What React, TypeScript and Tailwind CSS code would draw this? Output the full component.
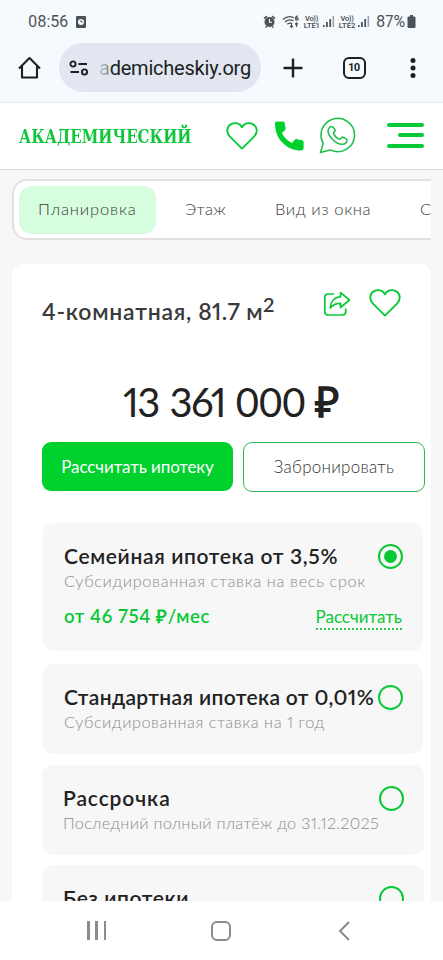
import { clsx } from "clsx";

interface Option {
  title: string;
  note?: string;
  titleClass: string;
  noteClass?: string;
  boxClass: string;
  payment?: string;
}

const options: Option[] = [
  {
    title: "Семейная ипотека от 3,5%",
    note: "Субсидированная ставка на весь срок",
    titleClass: "tracking-[0.65px]",
    noteClass: "tracking-[0.65px]",
    boxClass: "ml-[31px] w-[380px] h-[128px] mb-[13px]",
    payment: "от 46 754 ₽/мес",
  },
  {
    title: "Стандартная ипотека от 0,01%",
    note: "Субсидированная ставка на 1 год",
    titleClass: "tracking-[0.35px]",
    noteClass: "tracking-[0.53px]",
    boxClass: "ml-[31px] w-[380px] h-[90px] mb-[11px]",
  },
  {
    title: "Рассрочка",
    note: "Последний полный платёж до 31.12.2025",
    titleClass: "tracking-[0.9px]",
    noteClass: "tracking-[0.28px]",
    boxClass: "ml-[30px] w-[382px] h-[90px] mb-[10px]",
  },
  {
    title: "Без ипотеки",
    titleClass: "tracking-[0.6px]",
    boxClass: "ml-[30px] w-[382px] h-[90px]",
  },
];

function HeartIcon({ className }: { className?: string }) {
  return (
    <svg viewBox="0 0 32 28" className={clsx("h-7 w-8 shrink-0", className)} fill="none" stroke="#08c935" strokeWidth="1.9" strokeLinejoin="round">
      <path d="M16 26.6 3.7 14.3C-.3 9.9 1 4.2 5.2 2.1 9.5-.1 13.9 1.5 16 5.3c2.1-3.8 6.5-5.4 10.8-3.2 4.2 2.1 5.5 7.8 1.5 12.2Z" />
    </svg>
  );
}

function Signal() {
  return (
    <svg viewBox="0 0 13 13" className="h-[13px] w-[13px] shrink-0" fill="#4c5357">
      <rect x="1" y="10" width="1.6" height="2" />
      <rect x="4" y="7" width="1.8" height="5" />
      <rect x="7.3" y="4" width="1.8" height="8" />
      <rect x="10.5" y="1" width="1.6" height="11" fill="#9da4a9" />
    </svg>
  );
}

function Lte({ slot }: { slot: number }) {
  return (
    <div className="flex w-[17px] shrink-0 flex-col items-center text-[7.5px] font-semibold leading-[7px] text-[#4c5357]">
      <span className="tracking-[-0.3px]">Vo))</span>
      <span>LTE{slot}</span>
    </div>
  );
}

function StatusBar() {
  return (
    <div className="flex h-[43px] items-center pr-[27px] pl-7 font-[Roboto,sans-serif] text-[#4c5357]">
      <span className="w-[41px] text-[16px] tracking-[-0.1px]">08:56</span>
      <svg viewBox="0 0 10 12" className="ml-[7px] h-3 w-[10px]">
        <rect width="10" height="12" rx="1" fill="#4c5357" />
        <circle cx="5" cy="6" r="3" fill="#f5faff" />
        <path d="M5 4.2V6h1.7" stroke="#4c5357" fill="none" />
      </svg>
      <div className="ml-auto flex items-center">
        <svg viewBox="0 0 13 13" className="h-[13px] w-[13px]" fill="#4c5357">
          <circle cx="6.5" cy="7" r="5" />
          <path d="m.5 3 3-2.5 1 1.2-3 2.5ZM12.5 3l-3-2.5-1 1.2 3 2.5ZM2 12.5l1.5-2 1 .8-1.3 1.7ZM11 12.5l-1.5-2-1 .8L9.8 13Z" />
          <path d="M6.5 4v3.2H9" fill="none" stroke="#f5faff" strokeWidth="1.1" />
        </svg>
        <svg viewBox="0 0 18 13" className="ml-[6px] h-[13px] w-[18px]" fill="none" stroke="#4c5357" strokeWidth="1.2">
          <path d="M1 4.5C4.5 1.3 9 1.2 12 3M3 7c2.5-2.3 6-2.5 8.5-1M5.3 9.2c1.5-1.3 3.2-1.4 4.7-.6" />
          <path d="M9.5 8v4M8 10.8 9.5 12.3 11 10.8M14.5 12V8M13 9.3l1.5-1.5L16 9.3" />
          <path d="M15.8 1.2c-2-.2-2.4 1.3-2.2 3 .2 1.4 2.6 1.3 2.6-.2 0-1.3-1.8-1.5-2.5-.4" />
        </svg>
        <div className="ml-[3px] flex items-center gap-[1.5px]">
          <Lte slot={1} />
          <Signal />
          <div className="w-px" />
          <Lte slot={2} />
          <Signal />
        </div>
        <span className="ml-[6px] text-[16px] tracking-[-0.1px]">87%</span>
        <svg viewBox="0 0 8 13" className="ml-[2px] h-[13px] w-[9px]" fill="#4c5357">
          <path d="M2.5 0h3v1.5H7a1 1 0 0 1 1 1V12a1 1 0 0 1-1 1H1a1 1 0 0 1-1-1V2.5a1 1 0 0 1 1-1h1.5Z" />
        </svg>
      </div>
    </div>
  );
}

function BrowserBar() {
  return (
    <div className="flex h-[49px] items-center text-[#1b1f23]">
      <svg viewBox="0 0 24 24" className="ml-[18px] h-6 w-6 shrink-0" fill="none" stroke="currentColor" strokeWidth="2.1" strokeLinejoin="round">
        <path d="M1 12.5 11.5 2 22 12.5M4 10v11.5h15V10" />
      </svg>
      <div className="ml-[17px] flex h-[49px] w-[202px] shrink-0 items-center rounded-full bg-[#e1e6f0]">
        <svg viewBox="0 0 20 16" className="ml-[10px] h-4 w-5" fill="none" stroke="currentColor" strokeWidth="1.9">
          <circle cx="4" cy="4" r="2.6" />
          <path d="M9.5 4H18M1.5 12H10" />
          <circle cx="15.5" cy="12" r="2.6" />
        </svg>
        <span className="ml-[10px] whitespace-nowrap font-[Roboto,sans-serif] text-[20px] leading-6 tracking-[-0.22px]">
          <span className="bg-linear-to-r from-[#c3c8d1] to-[#7f858d] bg-clip-text text-transparent">a</span>demicheskiy.org
        </span>
      </div>
      <svg viewBox="0 0 20 20" className="ml-[22px] h-5 w-5 shrink-0" stroke="currentColor" strokeWidth="2.4">
        <path d="M10 .5v19M.5 10h19" />
      </svg>
      <div className="ml-[40px] flex h-[22px] w-[23px] shrink-0 items-center justify-center rounded-[6px] border-2 border-[#1b1f23] pt-[2px] font-[Roboto,sans-serif] text-[11px] font-bold">
        10
      </div>
      <svg viewBox="0 0 6 20" className="ml-[44px] h-5 w-[6px] shrink-0" fill="currentColor">
        <circle cx="3" cy="2.6" r="2.5" />
        <circle cx="3" cy="10" r="2.5" />
        <circle cx="3" cy="17.4" r="2.5" />
      </svg>
    </div>
  );
}

function SiteHeader() {
  return (
    <header className="flex h-[67px] shrink-0 items-center border-b border-[#dcdcdc] bg-white pl-[19px]">
      <span className="w-[172px] origin-left scale-x-[0.925] whitespace-nowrap font-['DejaVu_Serif_Condensed','DejaVu_Serif',serif] text-[18px] font-bold text-[#10c63b]">
        АКАДЕМИЧЕСКИЙ
      </span>
      <HeartIcon className="ml-[35px]" />
      <svg viewBox="0 0 30 30" className="ml-[16px] h-[30px] w-[30px] shrink-0" fill="#00d12d">
        <path d="M1 2.5C1 1.2 2 .5 3.5.5h5c1.5 0 2.2.8 2.3 2.2.1 1.5.4 2.8.7 4 .4 1.3 0 2-.8 2.8L7.9 12c2 4.3 5.5 7.8 10 10l2.6-3c.8-.8 1.6-1.1 2.7-.7 1.2.4 2.6.6 4.1.7 1.5.1 2.3.9 2.3 2.3v5.8c0 1.6-.9 2.5-2.5 2.5C12.6 29.6 1 18 1 2.5Z" />
      </svg>
      <svg viewBox="0 0 38 38" className="mb-[2px] ml-[15px] h-[37px] w-[37px] shrink-0" fill="none" stroke="#1fbf4a" strokeWidth="1.6" strokeLinejoin="round">
        <path d="m1.5 36.5 2.8-9.3C-1 17.5 3.5 5.5 14 2.2 25-1.2 36.5 7 36.5 18.5c0 12.700-13.500 21-25 15.300Z" />
        <path d="M12.800 9.800c-1.300-.3-3.500 2-3.500 4.400 0 6.100 9 14.300 14.700 13.800 2.300-.2 4.600-1.800 4.600-4.500 0-.8-4.200-3-5-2.800-.8.2-1.600 2.300-2.500 2.200-2.200-.3-6-4.200-6.200-6.300-.1-.8 1.700-1.800 1.700-2.700 0-.9-2-4-3.800-4.100Z" />
      </svg>
      <div className="mb-[2px] ml-[31px] flex flex-col items-end gap-[6.5px]">
        <div className="h-1 w-[37px] rounded-full bg-[#08c935]" />
        <div className="h-1 w-[26px] rounded-full bg-[#08c935]" />
        <div className="h-1 w-[37px] rounded-full bg-[#08c935]" />
      </div>
    </header>
  );
}

function Tabs() {
  return (
    <div className="mx-3 mt-[9px] flex h-[61px] shrink-0 items-center overflow-hidden rounded-l-[15px] border-y-2 border-l-2 border-[#e4e1e3] bg-white pl-[5px] text-[16.5px] font-light whitespace-nowrap text-[#3c3c3c]">
      <div className="flex h-12 w-[137px] shrink-0 items-center rounded-[13px] bg-[#d7fddf] pl-[19px] tracking-[0.85px]">Планировка</div>
      <div className="ml-[29px] w-[41px] shrink-0 tracking-[0.3px]">Этаж</div>
      <div className="ml-[49px] w-[96px] shrink-0 tracking-[0.6px]">Вид из окна</div>
      <div className="ml-[49px] shrink-0">С</div>
    </div>
  );
}

function OptionCard({ option, checked }: { option: Option; checked: boolean }) {
  return (
    <div className={clsx("shrink-0 rounded-[10px] bg-[#f7f7f7] pt-5 pr-5 pl-[21px]", option.boxClass)}>
      <div className="flex items-start justify-between">
        <div className="whitespace-nowrap">
          <div className={clsx("pb-[2px] text-[21px] font-semibold leading-[25px] text-[#222]", option.titleClass)}>{option.title}</div>
          {option.note && (
            <div className={clsx("text-[16.3px] font-light leading-[22px] text-[#8c8c8c]", option.noteClass)}>{option.note}</div>
          )}
        </div>
        <div className="mt-[0.5px] -ml-3 flex h-[25px] w-[25px] shrink-0 items-center justify-center rounded-full border-[2.5px] border-[#08c935]">
          {checked && <div className="h-[13px] w-[13px] rounded-full bg-[#08c935]" />}
        </div>
      </div>
      {option.payment && (
        <div className="mt-[13px] mr-px flex items-start justify-between whitespace-nowrap leading-[23px] text-[#08c935]">
          <span className="text-[18.5px] font-semibold tracking-[0.6px]">{option.payment}</span>
          <span className="border-b-2 border-dotted border-[#2bc850] text-[17px]">Рассчитать</span>
        </div>
      )}
    </div>
  );
}

function ApartmentCard() {
  return (
    <section className="mx-3 mt-[24px] flex min-h-0 flex-1 flex-col overflow-hidden rounded-t-xl bg-white">
      <div className="flex h-[64px] shrink-0 items-start pt-[25px] pl-[30px]">
        <h1 className="mt-[6px] w-[281px] whitespace-nowrap text-[23px] font-semibold leading-[32px] tracking-[0.4px] text-[#3a3a3a]">
          <span className="tracking-[0.75px]">4-комнатная,</span> 81.7 м<sup className="top-[-0.4em] text-[20px]">2</sup>
        </h1>
        <svg viewBox="0 0 28 26" className="mt-[2px] h-[26px] w-7 shrink-0" fill="none" stroke="#08c935" strokeWidth="1.7" strokeLinejoin="round" strokeLinecap="round">
          <path d="M10.5 3H5a3.2 3.2 0 0 0-3.2 3.2v14.6A3.2 3.2 0 0 0 5 24h14.5a3.2 3.2 0 0 0 3.2-3.2V18" />
          <path d="M17.5 1.7 26.5 9l-9 7.5v-4.2c-4.5-.2-7.5 1.3-10.3 4.7.4-6 3.8-10.8 10.3-11.2Z" />
        </svg>
        <HeartIcon className="ml-[18px]" />
      </div>
      <div className="flex h-[114px] shrink-0 items-end pb-[18px] pl-[111px]">
        <div className="whitespace-nowrap text-[40px] leading-[44px] text-[#222]">
          <span className="tracking-[-1.7px] [word-spacing:2.500px]">13 361 </span>
          <span className="tabular-nums">000</span>
          <span className="ml-[10px] text-[42px] font-extrabold">₽</span>
        </div>
      </div>
      <div className="mb-[31px] flex h-[50px] shrink-0 gap-[10px] pl-[30px] text-[17px]">
        <button className="h-[49px] w-[191px] shrink-0 rounded-[9px] bg-[#00d12d] tracking-[-0.1px] whitespace-nowrap text-white">Рассчитать ипотеку</button>
        <button className="h-[50px] w-[182px] shrink-0 rounded-[9px] border-[1.5px] border-[#2fb757] font-light tracking-[0.25px] whitespace-nowrap text-[#333]">Забронировать</button>
      </div>
      {options.map((option, index) => (
        <OptionCard key={option.title} option={option} checked={index === 0} />
      ))}
    </section>
  );
}

function NavBar() {
  return (
    <nav className="flex h-[59px] shrink-0 items-center bg-white pl-[87px] text-[#8b8b8b]">
      <div className="flex w-[19px] justify-between">
        <div className="h-[19px] w-[2.5px] bg-[#8b8b8b]" />
        <div className="h-[19px] w-[2.5px] bg-[#8b8b8b]" />
        <div className="h-[19px] w-[2.5px] bg-[#8b8b8b]" />
      </div>
      <div className="ml-[105px] h-5 w-5 rounded-[6px] border-2 border-[#8b8b8b]" />
      <svg viewBox="0 0 12 20" className="ml-[107px] h-5 w-3" fill="none" stroke="currentColor" strokeWidth="2">
        <path d="m11 1-9 9 9 9" />
      </svg>
    </nav>
  );
}

export default function App() {
  return (
    <div className="flex h-[960px] w-[443px] flex-col overflow-hidden bg-[#f7f7f7] font-[Lato,sans-serif] proportional-nums">
      <div className="h-[103px] shrink-0 border-b border-[#e3ebf2] bg-[#f5faff]">
        <StatusBar />
        <BrowserBar />
      </div>
      <SiteHeader />
      <Tabs />
      <ApartmentCard />
      <NavBar />
    </div>
  );
}
